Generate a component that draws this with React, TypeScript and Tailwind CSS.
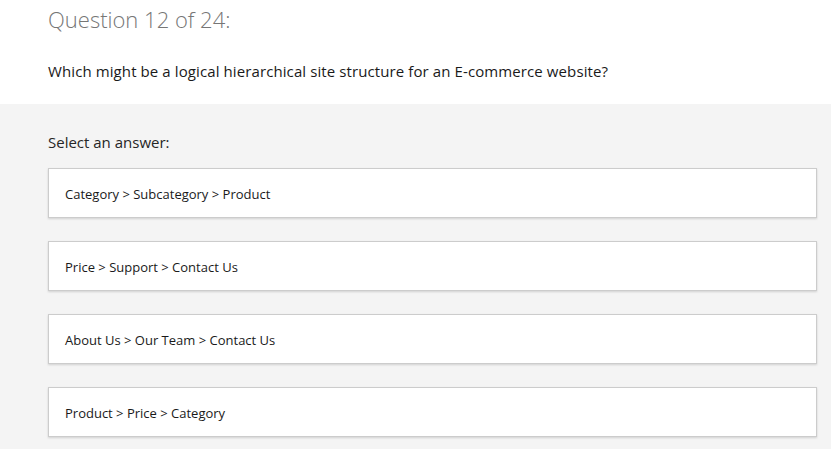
import React from "react";

const answers = [
  "Category > Subcategory > Product",
  "Price > Support > Contact Us",
  "About Us > Our Team > Contact Us",
  "Product > Price > Category",
];

export default function App() {
  return (
    <div className="w-[831px] h-[449px] overflow-hidden bg-[#f4f4f4]" style={{ fontFamily: '"Open Sans", "Noto Sans", sans-serif' }}>
      <div className="bg-white h-[104px] pl-[48px] pt-[3px]">
        <h1 className="text-[22px] leading-[32px] font-light text-[#767676]">Question 12 of 24:</h1>
        <p className="mt-[26px] text-[15px] leading-[20px] tracking-[0.1px] text-[#1a1a1a]">
          Which might be a logical hierarchical site structure for an E-commerce website?
        </p>
      </div>
      <div className="pl-[48px] pr-[14px] pt-[28px]">
        <p className="text-[15px] leading-[20px] text-[#262626]">Select an answer:</p>
        <div className="mt-[16px] flex flex-col gap-[23px]">
          {answers.map((a) => (
            <div
              key={a}
              className="h-[50px] bg-white border border-[#cccccc] shadow-[0_1px_2px_rgba(0,0,0,0.15)] flex items-center pl-[16px] pt-[3px] text-[13px] text-[#1a1a1a]"
            >
              {a}
            </div>
          ))}
        </div>
      </div>
    </div>
  );
}
